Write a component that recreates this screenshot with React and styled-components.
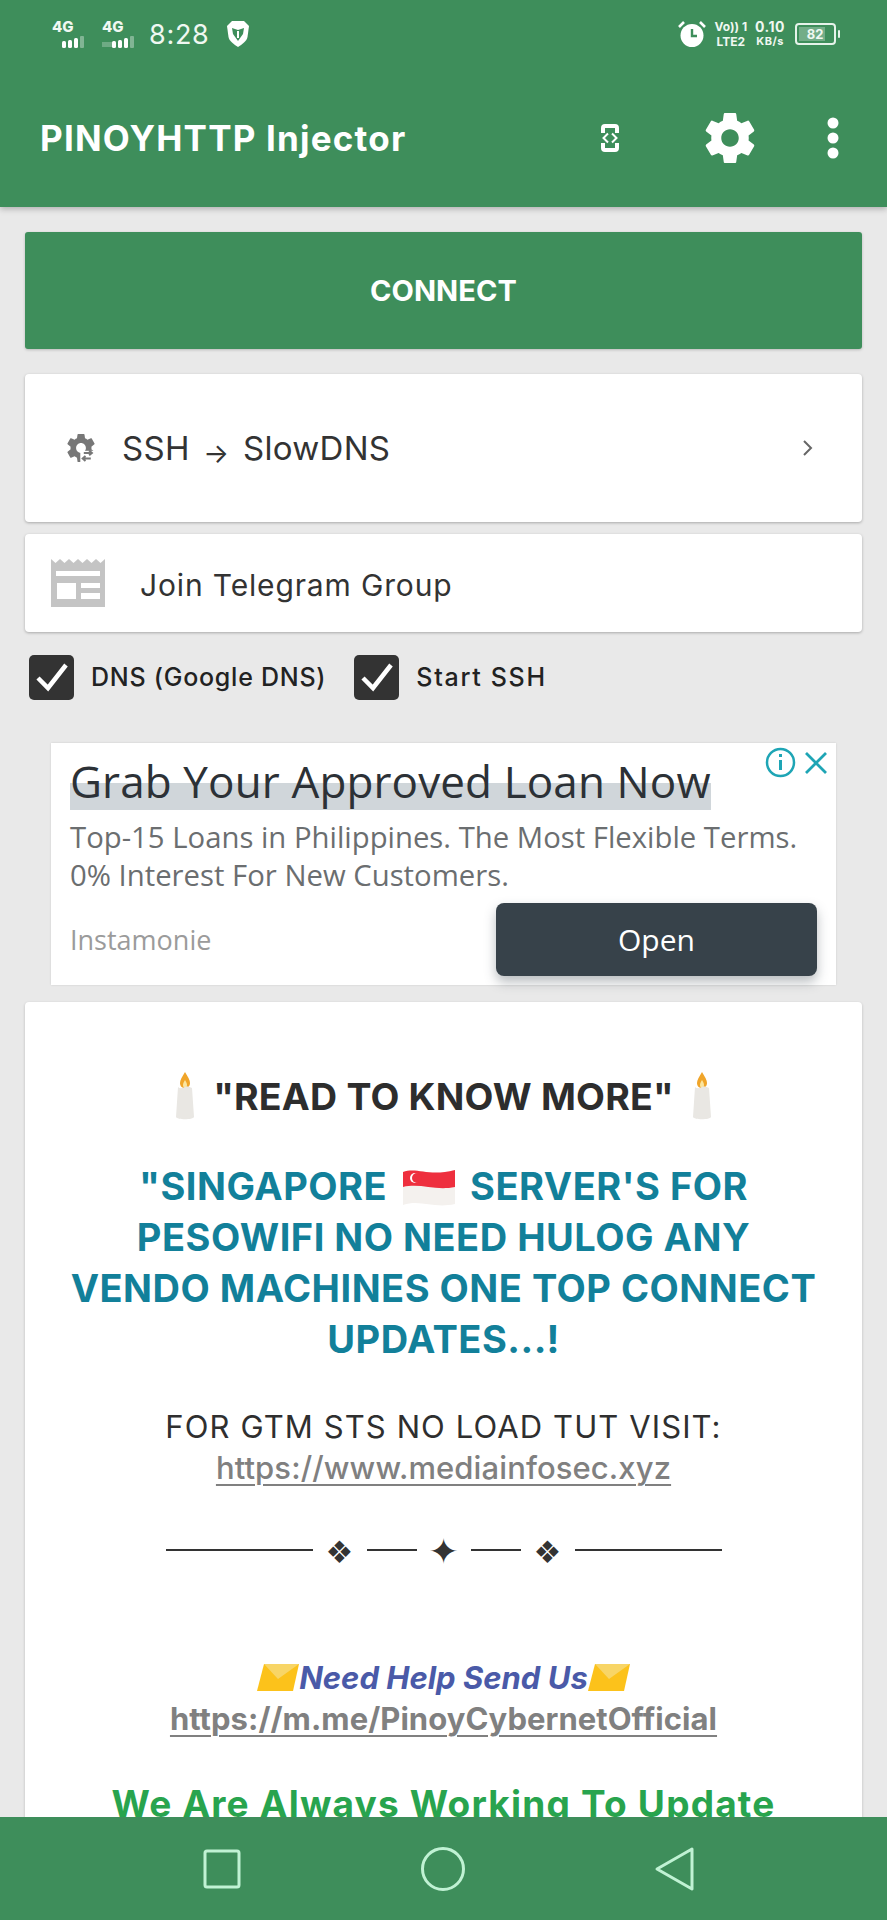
import React from "react";
import styled, { createGlobalStyle } from "styled-components";

const GREEN = "#3e8e5b";
const UI = '"Inter", "Liberation Sans", sans-serif';
const AD = '"Open Sans", "Lato", sans-serif';

const Global = createGlobalStyle`
  html, body { margin: 0; padding: 0; background: #e9e9e9; }
  * { box-sizing: border-box; }
`;

const Screen = styled.div`
  width: 887px; height: 1920px; display: flex; flex-direction: column;
  overflow: hidden; background: #e9e9e9; font-family: ${UI}; color: #2f2f2f;
`;
const Header = styled.header`
  height: 207px; flex: none; background: ${GREEN}; color: #fff;
  display: flex; flex-direction: column; padding: 0 48px 0 52px;
  box-shadow: 0 2px 6px rgba(0,0,0,.25); position: relative; z-index: 2;
`;
const StatusBar = styled.div`
  height: 68px; display: flex; align-items: center; justify-content: space-between;
  color: #f0f8f2; padding-right: 3px;
`;
const StatusGroup = styled.div`display: flex; align-items: center; gap: ${p => p.$gap || 8}px;`;
const Clock = styled.span`font-size: 27px; letter-spacing: .7px; margin: 0 7px 0 -3px; font-weight: 400;`;
const Signal = styled.div`display: flex; flex-direction: column; width: 40px; height: 30px;`;
const SignalLabel = styled.span`font-size: 15px; font-weight: 800; line-height: 15px;`;
const SmallStack = styled.div`
  display: flex; flex-direction: column; align-items: center;
  font-size: ${p => p.$size}px; line-height: 15px; font-weight: 700; letter-spacing: ${p => p.$ls}px; white-space: nowrap;
`;
const SmallUnit = styled.span`font-size: 11px;`;
const BatteryBox = styled.div`
  width: 41px; height: 22px; border: 2px solid #e6f3ea; border-radius: 4px; padding: 2px;
  font-size: 13px; font-weight: 700; position: relative; margin-left: 2px;
  &::after { content: ""; position: absolute; right: -6px; top: 5px; width: 2px; height: 8px; background: #e6f3ea; border-radius: 1px; }
`;
const BatteryFill = styled.div`
  width: 80%; height: 100%; background: rgba(255,255,255,.28); display: flex; align-items: center; justify-content: flex-end;
  padding-right: 2px;
`;
const Toolbar = styled.div`
  flex: 1; display: flex; align-items: center; margin: 0 0 0 -12px;
`;
const Title = styled.h1`
  margin: 0; flex: 1; font-size: 35px; font-weight: 700; letter-spacing: 1.2px; white-space: nowrap;
`;
const ToolIcon = styled.div`
  display: flex; align-items: center; justify-content: center; margin-left: ${p => p.$ml}px;
`;
const Main = styled.main`
  flex: 1; min-height: 0; overflow: hidden; display: flex; flex-direction: column; padding: 25px 25px 0;
`;
const Connect = styled.button`
  flex: none; height: 117px; border: 0; border-radius: 3px; background: ${GREEN}; color: #fff;
  font: 700 29px ${UI}; letter-spacing: .1px; box-shadow: 0 1px 3px rgba(0,0,0,.2);
`;
const Card = styled.div`
  flex: none; background: #fff; border-radius: 4px; box-shadow: 0 1px 3px rgba(0,0,0,.28);
  display: flex; align-items: center; height: ${p => p.$h}px; margin-top: ${p => p.$mt}px;
  padding: ${p => p.$pad};
`;
const ConfigText = styled.span`flex: 1; font-size: 33px; margin-left: 27px; letter-spacing: .3px; white-space: nowrap; color: #333;`;
const Arrow = styled.span`font-size: 27px; margin: 0 4px; position: relative; top: 3px;`;
const JoinText = styled.span`font-size: 30px; margin: 3px 0 0 35px; letter-spacing: .85px; color: #333;`;
const Checks = styled.div`flex: none; display: flex; align-items: center; height: 46px; margin: 22px 0 0 4px;`;
const Check = styled.label`display: flex; align-items: center; margin-right: ${p => p.$mr}px;`;
const Box = styled.span`
  width: 45px; height: 45px; border-radius: 5px; background: #333; display: flex; align-items: center; justify-content: center;
`;
const CheckLabel = styled.span`font-size: 25px; font-weight: 500; margin-left: 17px; letter-spacing: ${p => p.$ls}px; color: #222; white-space: nowrap;`;
const Ad = styled.section`
  flex: none; margin: 43px 26px 0; height: 242px; background: #fff; padding: 0 19px; position: relative;
  font-family: ${AD}; box-shadow: 0 0 2px rgba(0,0,0,.12);
`;
const AdControls = styled.div`
  position: absolute; top: 4px; right: 8px; display: flex; align-items: center; gap: 8px;
`;
const AdTitle = styled.div`
  margin-top: 18px; height: 49px; font-size: 44px; font-weight: 500; line-height: 40px; letter-spacing: .12px; color: #2c3136; white-space: nowrap;
  width: 641px;
  background: linear-gradient(#d0d6da, #d0d6da) 0 100% / 100% 27px no-repeat;
`;
const AdDesc = styled.p`
  margin: 8px 0 0; font-size: 29.300px; line-height: 38px; color: #6b6e70; white-space: nowrap;
`;
const AdFoot = styled.div`display: flex; align-items: center; justify-content: space-between; margin-top: 9px;`;
const Advertiser = styled.span`font-size: 27px; color: #9b9b9b;`;
const Open = styled.button`
  width: 321px; height: 73px; border: 0; border-radius: 8px; background: #37424a; color: #fff;
  font: 400 30px ${AD}; box-shadow: 0 6px 12px rgba(55,66,74,.35);
`;
const Info = styled.div`
  flex: none; margin-top: 17px; height: 900px; background: #fff; border-radius: 4px; padding: 70px 0 0;
  box-shadow: 0 1px 3px rgba(0,0,0,.2); text-align: center;
`;
const Heading = styled.div`
  display: flex; align-items: center; justify-content: center; gap: 18px; height: 48px;
  font-size: 37.500px; font-weight: 700; letter-spacing: .2px; color: #2d2d2d;
`;
const Lines = styled.div`
  margin-top: 41px; font-size: 38px; font-weight: 700; line-height: 51px; color: #12809a; letter-spacing: .5px;
`;
const Flag = styled.svg`vertical-align: -7px; margin: 0 5px;`;
const Plain = styled.div`margin-top: ${p => p.$mt}px; font-size: 31px; line-height: 40px; letter-spacing: 1.1px; color: #2f2f2f;`;
const Link = styled.div`
  font-size: 31px; line-height: 42px; letter-spacing: ${p => p.$ls}px; color: #808080; font-weight: ${p => p.$w};
  text-decoration: underline; text-underline-offset: 5px; text-decoration-thickness: 2px;
`;
const Divider = styled.div`
  margin: 39px 0 0; height: 44px; display: flex; align-items: center; justify-content: center; gap: 12px; color: #333;
`;
const Rule = styled.span`width: ${p => p.$w}px; height: 2px; background: #333;`;
const Ornament = styled.span`font: ${p => p.$size}px "DejaVu Sans", sans-serif; line-height: 44px; width: 30px; text-align: center; position: relative; top: 2px;`;
const Help = styled.div`
  margin-top: 84px; height: 42px; display: flex; align-items: center; justify-content: center;
  font-size: 31px; font-weight: 700; font-style: italic; color: #4a5aa8; white-space: nowrap;
`;
const Always = styled.div`
  margin-top: 40px; font-size: 37px; font-weight: 700; line-height: 48px; letter-spacing: 1.2px; color: #28a44e; white-space: nowrap;
`;
const Nav = styled.nav`
  height: 103px; flex: none; background: ${GREEN}; display: flex; align-items: center;
  padding-left: 203px; position: relative; z-index: 2;
`;
const NavIcon = styled.svg`display: block; margin-right: ${p => p.$mr || 0}px; flex: none;`;

const Bars = ({ faded }) => (
  <svg width="36" height="14" viewBox="0 0 36 14" fill="#fff">
    {faded && <rect x="0" y="8" width="12" height="5" opacity=".25" />}
    <rect x="10" y="7" width="4" height="7" rx="1.500" />
    <rect x="16" y="6" width="4" height="8" rx="1.500" />
    <rect x="22" y="4" width="4" height="10" rx="1.500" />
    <rect x="28" y="2" width="4" height="12" rx="1" opacity=".35" />
  </svg>
);

const Brave = () => (
  <svg width="24" height="28" viewBox="0 0 24 28">
    <path d="M6 1h12l5 5-1.500 11c-.7 4-5.500 7.500-9.500 10C8 24.500 3.200 21 2.500 17L1 6z" fill="#fff" />
    <path d="M6 8l6 2 6-2-1 6-5 7-5-7z" fill={GREEN} />
    <path d="M11 11h2v7h-2z" fill="#fff" />
  </svg>
);

const Alarm = () => (
  <svg width="30" height="30" viewBox="0 0 30 30">
    <circle cx="15" cy="16.500" r="11.500" fill="#fff" />
    <path d="M15 10v7h5" stroke={GREEN} strokeWidth="2.400" fill="none" />
    <path d="M2 8l5-5M28 8l-5-5" stroke="#fff" strokeWidth="2.600" />
  </svg>
);

const CodePhone = () => (
  <svg width="18" height="28" viewBox="0 0 18 28">
    <path d="M2 9V4a2 2 0 0 1 2-2h10a2 2 0 0 1 2 2v5M2 19v5a2 2 0 0 0 2 2h10a2 2 0 0 0 2-2v-5" stroke="#fff" strokeWidth="4" fill="none" />
    <path d="M7 9.500l-4.500 4.500 4.500 4.500M11 9.500l4.500 4.500-4.500 4.500" stroke="#fff" strokeWidth="2" fill="none" />
  </svg>
);

const gearPath = "M19.430 12.980c.040-.320.070-.640.070-.980s-.030-.660-.070-.980l2.110-1.650c.190-.150.240-.420.120-.640l-2-3.460c-.120-.220-.390-.300-.610-.220l-2.490 1c-.520-.400-1.080-.730-1.690-.980l-.380-2.650C14.460 2.180 14.250 2 14 2h-4c-.250 0-.460.180-.490.420l-.380 2.650c-.610.250-1.170.590-1.690.980l-2.490-1c-.230-.090-.490 0-.610.220l-2 3.460c-.130.220-.070.490.120.640l2.110 1.650c-.040.320-.070.650-.070.980s.030.660.070.980l-2.110 1.650c-.190.150-.240.420-.120.640l2 3.460c.120.220.390.300.610.220l2.490-1c.520.400 1.080.730 1.690.980l.380 2.650c.030.240.240.420.490.420h4c.250 0 .460-.180.490-.420l.380-2.650c.610-.250 1.170-.590 1.690-.980l2.490 1c.230.090.490 0 .610-.220l2-3.460c.120-.220.070-.490-.120-.640l-2.110-1.650zM12 15.500c-1.930 0-3.500-1.570-3.500-3.500s1.570-3.500 3.500-3.500 3.500 1.570 3.500 3.500-1.570 3.500-3.500 3.500z";

const Gear = ({ size, color }) => (
  <svg width={size} height={size} viewBox="2 2 20 20"><path d={gearPath} fill={color} /></svg>
);

const ConfigGear = () => (
  <svg width="28" height="28" viewBox="2 2 20 20">
    <path d={gearPath} fill="#777" />
    <path d="M11.500 14h11v9h-11z" fill="#fff" />
    <path d="M14 15.500h5.500M17.800 13.800l2 1.700-2 1.700" stroke="#777" strokeWidth="1.400" fill="none" />
    <path d="M19 19.500h-5M15.200 17.800l-2 1.700 2 1.700" stroke="#777" strokeWidth="1.400" fill="none" />
  </svg>
);

const Dots = () => (
  <svg width="12" height="42" viewBox="0 0 12 42" fill="#fff">
    <circle cx="6" cy="6" r="5.500" /><circle cx="6" cy="21" r="5.500" /><circle cx="6" cy="36" r="5.500" />
  </svg>
);

const Chevron = () => (
  <svg width="12" height="18" viewBox="0 0 12 18"><path d="M2 2l7 7-7 7" stroke="#666" strokeWidth="2" fill="none" /></svg>
);

const Newspaper = () => (
  <svg width="54" height="48" viewBox="0 0 54 48">
    <path d="M0 0l4.500 4 4.500-4 4.500 4 4.500-4 4.500 4 4.500-4 4.500 4 4.500-4 4.500 4 4.500-4 4.500 4L54 0v48H0z" fill="#c4c4c4" />
    <path d="M5 12h44v5H5zM6 24h19v16H6zM30 24h19v5H30zM30 34h19v6H30z" fill="#fff" />
  </svg>
);

const Tick = () => (
  <svg width="36" height="30" viewBox="0 0 36 30"><path d="M4 16l10 10L32 3" stroke="#fff" strokeWidth="4.500" fill="none" /></svg>
);

const InfoIcon = () => (
  <svg width="31" height="31" viewBox="0 0 31 31" fill="none" stroke="#1ea5b5">
    <circle cx="15.500" cy="15.500" r="13.500" strokeWidth="2.500" />
    <path d="M15.500 13v10" strokeWidth="3" /><path d="M15.500 7v3" strokeWidth="3" />
  </svg>
);

const CloseIcon = () => (
  <svg width="24" height="24" viewBox="0 0 24 24"><path d="M2 2l20 20M22 2L2 22" stroke="#1ea5b5" strokeWidth="2.800" /></svg>
);

const Candle = () => (
  <svg width="20" height="48" viewBox="0 0 20 48">
    <path d="M10 0c3 5 5 8 5 11 0 3-2 5-5 5s-5-2-5-5c0-3 2-6 5-11z" fill="#f0a52a" />
    <path d="M10 8c1 2 2 3 2 5s-1 3-2 3-2-1-2-3 1-3 2-5z" fill="#fbe6a0" />
    <path d="M3 15c2 2 5 1 7 0s5 0 7 1l2 29c-1 3-17 3-18 0z" fill="#e9e7e3" />
  </svg>
);

const SgFlag = () => (
  <Flag width="54" height="40" viewBox="0 0 54 40">
    <path d="M1 5c14-5 26 5 52-2v34c-22 5-34-5-52 1z" fill="#f4f1ee" />
    <path d="M1 5c14-5 26 5 52-2v17c-20 4-34-4-52 0z" fill="#ee2f3e" />
    <circle cx="13" cy="11" r="5" fill="#fff" /><circle cx="15" cy="11" r="5" fill="#ee2f3e" />
  </Flag>
);

const Envelope = () => (
  <svg width="42" height="27" viewBox="0 0 42 27">
    <path d="M7 0h35l-6 27H0z" fill="#fcc21b" />
    <path d="M7 0l14 15L42 0z" fill="#f8d566" />
  </svg>
);

export default function App() {
  return (
    <Screen>
      <Global />
      <Header>
        <StatusBar>
          <StatusGroup $gap={10}>
            <Signal><SignalLabel>4G</SignalLabel><Bars /></Signal>
            <Signal><SignalLabel>4G</SignalLabel><Bars faded /></Signal>
            <Clock>8:28</Clock>
            <Brave />
          </StatusGroup>
          <StatusGroup $gap={8}>
            <Alarm />
            <SmallStack $size={12} $ls={0}><span>Vo)) 1</span><span>LTE2</span></SmallStack>
            <SmallStack $size={14} $ls={.5}><span>0.10</span><SmallUnit>KB/s</SmallUnit></SmallStack>
            <BatteryBox><BatteryFill>82</BatteryFill></BatteryBox>
          </StatusGroup>
        </StatusBar>
        <Toolbar>
          <Title>PINOYHTTP Injector</Title>
          <ToolIcon><CodePhone /></ToolIcon>
          <ToolIcon $ml={86}><Gear size={50} color="#fff" /></ToolIcon>
          <ToolIcon $ml={72}><Dots /></ToolIcon>
        </Toolbar>
      </Header>
      <Main>
        <Connect>CONNECT</Connect>
        <Card $h={148} $mt={25} $pad="0 48px 0 42px">
          <ConfigGear />
          <ConfigText>SSH <Arrow>→</Arrow> SlowDNS</ConfigText>
          <Chevron />
        </Card>
        <Card $h={98} $mt={12} $pad="0 0 0 26px">
          <Newspaper />
          <JoinText>Join Telegram Group</JoinText>
        </Card>
        <Checks>
          <Check $mr={28}><Box><Tick /></Box><CheckLabel $ls={.75}>DNS (Google DNS)</CheckLabel></Check>
          <Check><Box><Tick /></Box><CheckLabel $ls={1.7}>Start SSH</CheckLabel></Check>
        </Checks>
        <Ad>
          <AdControls><InfoIcon /><CloseIcon /></AdControls>
          <AdTitle>Grab Your Approved Loan Now</AdTitle>
          <AdDesc>Top-15 Loans in Philippines. The Most Flexible Terms.<br />0% Interest For New Customers.</AdDesc>
          <AdFoot><Advertiser>Instamonie</Advertiser><Open>Open</Open></AdFoot>
        </Ad>
        <Info>
          <Heading><Candle />"READ TO KNOW MORE"<Candle /></Heading>
          <Lines>
            "SINGAPORE <SgFlag /> SERVER'S FOR<br />
            PESOWIFI NO NEED HULOG ANY<br />
            VENDO MACHINES ONE TOP CONNECT<br />
            UPDATES...!
          </Lines>
          <Plain $mt={42}>FOR GTM STS NO LOAD TUT VISIT:</Plain>
          <Link $ls={.1} $w={500}>https://www.mediainfosec.xyz</Link>
          <Divider>
            <Rule $w={147} /><Ornament $size={31}>❖</Ornament><Rule $w={50} /><Ornament $size={36}>✦</Ornament><Rule $w={50} /><Ornament $size={31}>❖</Ornament><Rule $w={147} />
          </Divider>
          <Help><Envelope />Need Help Send Us<Envelope /></Help>
          <Link $ls={.05} $w={700}>https://m.me/PinoyCybernetOfficial</Link>
          <Always>We Are Always Working To Update</Always>
        </Info>
      </Main>
      <Nav>
        <NavIcon $mr={179} width="38" height="40" viewBox="0 0 38 40"><rect x="2" y="2" width="34" height="36" rx="2" fill="none" stroke="#c0f2d4" strokeWidth="3" /></NavIcon>
        <NavIcon $mr={188} width="46" height="46" viewBox="0 0 46 46"><circle cx="23" cy="23" r="20.500" fill="none" stroke="#c0f2d4" strokeWidth="3" /></NavIcon>
        <NavIcon width="42" height="46" viewBox="0 0 42 46"><path d="M38 3L3 23l35 20z" fill="none" stroke="#c0f2d4" strokeWidth="3" strokeLinejoin="round" /></NavIcon>
      </Nav>
    </Screen>
  );
}
